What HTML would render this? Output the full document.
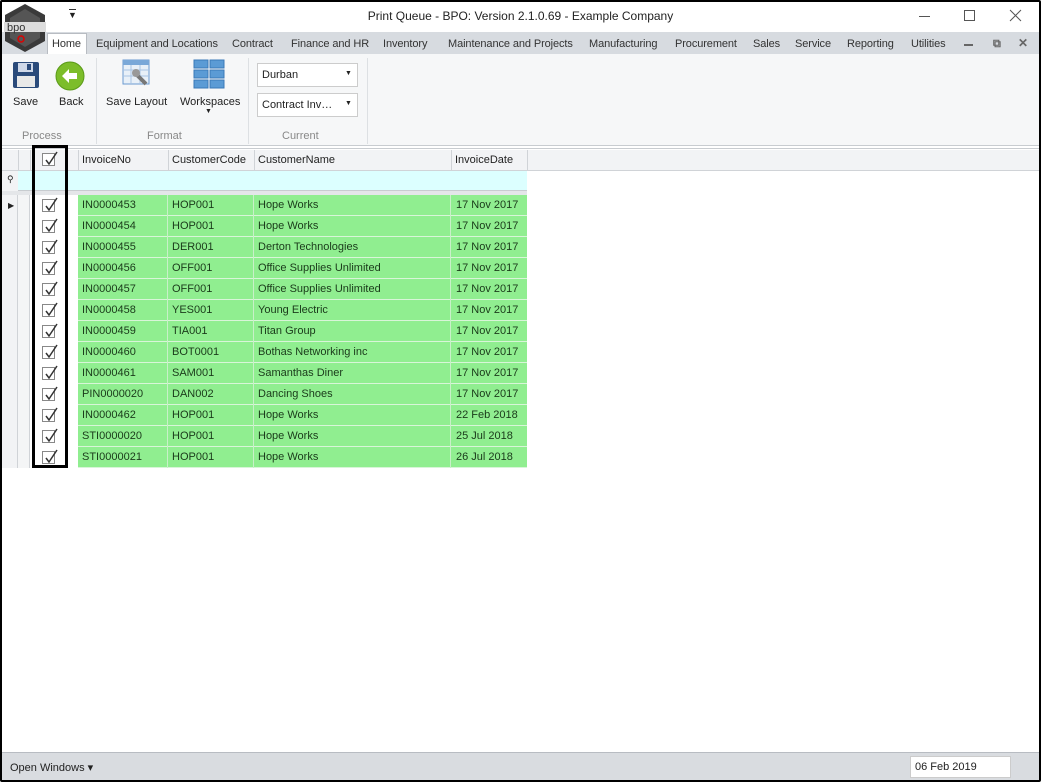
<!DOCTYPE html>
<html><head><style>
*{margin:0;padding:0;box-sizing:border-box}
body{width:1041px;height:782px;position:relative;overflow:hidden;background:#fff;font-family:"Liberation Sans",sans-serif;font-size:11px;color:#222}
.a{position:absolute}
.frame{left:0;top:0;width:1041px;height:782px;border:2px solid #000;border-radius:2px}
.tab{top:38px;font-size:11px;color:#333;letter-spacing:-0.1px}
.gl{top:130px;font-size:11px;color:#888}
.cb{position:absolute;width:13px;height:13px;border:1px solid #888;background:#fff}
.cb svg{position:absolute;left:0;top:-3px}
.row{position:absolute;left:78px;width:449px;height:21px;background:#90ee90;border-bottom:1px solid #d8f5d8}
.row span{position:absolute;top:4px;font-size:11px;color:#1a3a1a}
.hdr span{position:absolute;top:4px}
</style></head><body>
<!-- title bar -->
<div class="a" style="left:0;top:0;width:1041px;height:32px;background:#fff"></div>
<div class="a" style="left:68px;top:10px;font-size:9px">&#9660;</div>
<div class="a" style="left:69px;top:9px;width:7px;height:1px;background:#333"></div>
<div class="a" style="left:0;top:9px;width:1041px;text-align:center;font-size:12px;color:#222">Print Queue - BPO: Version 2.1.0.69 - Example Company</div>
<div class="a" style="left:919px;top:16px;width:11px;height:1px;background:#555"></div>
<div class="a" style="left:964px;top:10px;width:11px;height:11px;border:1px solid #555"></div>
<svg class="a" style="left:1009px;top:9px" width="13" height="13"><path d="M1 1L12 12M12 1L1 12" stroke="#555"/></svg>
<!-- tab strip -->
<div class="a" style="left:2px;top:32px;width:1037px;height:22px;background:#d7dbe0"></div>
<div class="a" style="left:47px;top:33px;width:40px;height:22px;background:#fff;border:1px solid #b8bcc2;border-bottom:none"></div>
<div class="a tab" style="left:52px">Home</div>
<div class="a tab" style="left:96px">Equipment and Locations</div>
<div class="a tab" style="left:232px">Contract</div>
<div class="a tab" style="left:291px">Finance and HR</div>
<div class="a tab" style="left:383px">Inventory</div>
<div class="a tab" style="left:448px">Maintenance and Projects</div>
<div class="a tab" style="left:589px">Manufacturing</div>
<div class="a tab" style="left:675px">Procurement</div>
<div class="a tab" style="left:753px">Sales</div>
<div class="a tab" style="left:795px">Service</div>
<div class="a tab" style="left:847px">Reporting</div>
<div class="a tab" style="left:911px">Utilities</div>
<div class="a" style="left:964px;top:44px;width:9px;height:2px;background:#666"></div>
<div class="a" style="left:993px;top:38px;font-size:11px;color:#666;font-weight:bold">&#10697;</div>
<div class="a" style="left:1018px;top:36px;font-size:12px;color:#666;font-weight:bold">&#10005;</div>
<svg class="a" style="left:3px;top:3px" width="44" height="50" viewBox="0 0 44 50"><polygon points="22,1 42,12 42,38 22,49 2,38 2,12" fill="#3a3a3a"/><polygon points="22,6 37,15 37,35 22,44 7,35 7,15" fill="#555"/><rect x="1" y="19" width="42" height="10" fill="#ddd"/><text x="4" y="28" font-size="11" fill="#333" font-family="Liberation Sans">bpo</text><circle cx="18" cy="36" r="3" fill="none" stroke="#d00" stroke-width="1.5"/></svg>
<!-- ribbon -->
<div class="a" style="left:2px;top:54px;width:1037px;height:92px;background:#f6f7f8;border-bottom:1px solid #c8ccd0"></div>
<div class="a" style="left:96px;top:58px;width:1px;height:86px;background:#dde0e3"></div>
<div class="a" style="left:248px;top:58px;width:1px;height:86px;background:#dde0e3"></div>
<div class="a" style="left:367px;top:58px;width:1px;height:86px;background:#dde0e3"></div>
<svg class="a" style="left:12px;top:61px" width="28" height="28"><rect x="1" y="1" width="26" height="26" rx="2" fill="#2a4a7a"/><rect x="6" y="2" width="15" height="9" fill="#cfd8e8"/><rect x="15" y="3" width="4" height="6" fill="#2a4a7a"/><rect x="5" y="15" width="18" height="11" fill="#e8e8e8"/></svg>
<svg class="a" style="left:55px;top:61px" width="30" height="30"><circle cx="15" cy="15" r="14" fill="#7cbd2a" stroke="#5a9a18"/><path d="M7 15l7-7v4h8v6h-8v4z" fill="#fff"/></svg>
<div class="a" style="left:13px;top:96px">Save</div>
<div class="a" style="left:59px;top:96px">Back</div>
<svg class="a" style="left:122px;top:58px" width="32" height="32"><rect x="1" y="2" width="26" height="24" fill="#e8f0f8" stroke="#6a9ad0"/><rect x="1" y="2" width="26" height="5" fill="#7aa8d8"/><path d="M1 12h26M1 18h26M9 7v19M18 7v19" stroke="#a8c4e4"/><path d="M14 16l10 10" stroke="#777" stroke-width="4"/><circle cx="14" cy="15" r="4" fill="#999"/></svg>
<svg class="a" style="left:193px;top:58px" width="32" height="32"><g fill="#5b9bd5" stroke="#3a78b8"><rect x="1" y="2" width="14" height="8"/><rect x="17" y="2" width="14" height="8"/><rect x="1" y="12" width="14" height="8"/><rect x="17" y="12" width="14" height="8"/><rect x="1" y="22" width="14" height="8"/><rect x="17" y="22" width="14" height="8"/></g></svg>
<div class="a" style="left:106px;top:96px">Save Layout</div>
<div class="a" style="left:180px;top:96px">Workspaces</div>
<div class="a" style="left:205px;top:108px;font-size:7px">&#9660;</div>
<div class="a" style="left:257px;top:63px;width:101px;height:24px;background:#fff;border:1px solid #ccc"></div>
<div class="a" style="left:262px;top:69px">Durban</div>
<div class="a" style="left:345px;top:70px;font-size:7px">&#9660;</div>
<div class="a" style="left:257px;top:93px;width:101px;height:24px;background:#fff;border:1px solid #ccc"></div>
<div class="a" style="left:262px;top:99px">Contract Inv…</div>
<div class="a" style="left:345px;top:100px;font-size:7px">&#9660;</div>
<div class="a gl" style="left:22px">Process</div>
<div class="a gl" style="left:147px">Format</div>
<div class="a gl" style="left:282px">Current</div>
<!-- grid header -->
<div class="a" style="left:2px;top:148px;width:1037px;height:1px;background:#c8ccd0"></div>
<div class="a hdr" style="left:2px;top:150px;width:1037px;height:21px;background:#f2f3f5;border-bottom:1px solid #d0d3d7">
<div class="a" style="left:16px;top:0;width:1px;height:21px;background:#d0d3d7"></div>
<div class="a" style="left:28px;top:0;width:1px;height:21px;background:#d0d3d7"></div>
<div class="a" style="left:76px;top:0;width:1px;height:21px;background:#d0d3d7"></div>
<div class="a" style="left:166px;top:0;width:1px;height:21px;background:#d0d3d7"></div>
<div class="a" style="left:252px;top:0;width:1px;height:21px;background:#d0d3d7"></div>
<div class="a" style="left:449px;top:0;width:1px;height:21px;background:#d0d3d7"></div>
<div class="a" style="left:525px;top:0;width:1px;height:21px;background:#d0d3d7"></div>
<span style="left:80px">InvoiceNo</span><span style="left:170px">CustomerCode</span><span style="left:256px">CustomerName</span><span style="left:453px">InvoiceDate</span>
</div>
<div class="a" style="left:2px;top:171px;width:16px;height:20px;background:#f2f3f5"></div>
<div class="a" style="left:7px;top:174px;font-size:9px">&#9906;</div>
<div class="a" style="left:18px;top:171px;width:509px;height:20px;background:#dcffff;border-bottom:1px solid #c8ccd0"></div>
<div class="a" style="left:2px;top:191px;width:525px;height:4px;background:#e4e6e9"></div>
<div class="a" style="left:2px;top:195px;width:16px;height:273px;background:#f2f3f5;border-right:1px solid #d0d3d7"></div>
<div class="a" style="left:18px;top:195px;width:12px;height:273px;background:#f4f5f6;border-right:1px solid #d0d3d7"></div>
<div class="a" style="left:8px;top:201px;font-size:8px">&#9654;</div>
<div id="rows"></div>
<div class="a" style="left:32px;top:145px;width:36px;height:323px;border:3px solid #000"></div>
<!-- status -->
<div class="a" style="left:2px;top:752px;width:1037px;height:28px;background:#d9dce0;border-top:1px solid #b8bcc2"></div>
<div class="a" style="left:10px;top:761px">Open Windows &#9662;</div>
<div class="a" style="left:910px;top:756px;width:101px;height:22px;background:#fff;border:1px solid #ccc"></div>
<div class="a" style="left:915px;top:761px">06 Feb 2019</div>
<div class="a frame"></div>
<script>
var d=[["IN0000453","HOP001","Hope Works","17 Nov 2017"],["IN0000454","HOP001","Hope Works","17 Nov 2017"],["IN0000455","DER001","Derton Technologies","17 Nov 2017"],["IN0000456","OFF001","Office Supplies Unlimited","17 Nov 2017"],["IN0000457","OFF001","Office Supplies Unlimited","17 Nov 2017"],["IN0000458","YES001","Young Electric","17 Nov 2017"],["IN0000459","TIA001","Titan Group","17 Nov 2017"],["IN0000460","BOT0001","Bothas Networking inc","17 Nov 2017"],["IN0000461","SAM001","Samanthas Diner","17 Nov 2017"],["PIN0000020","DAN002","Dancing Shoes","17 Nov 2017"],["IN0000462","HOP001","Hope Works","22 Feb 2018"],["STI0000020","HOP001","Hope Works","25 Jul 2018"],["STI0000021","HOP001","Hope Works","26 Jul 2018"]];
var h='',ck='<svg width="16" height="16"><path d="M3 9l3 4 8-12" stroke="#333" stroke-width="1.5" fill="none"/></svg>';
d.forEach(function(r,i){var t=195+i*21;
h+='<div class="row" style="top:'+t+'px"><span style="left:4px">'+r[0]+'</span><span style="left:94px">'+r[1]+'</span><span style="left:180px">'+r[2]+'</span><span style="left:378px">'+r[3]+'</span><div class="a" style="left:89px;top:0;width:1px;height:21px;background:#c8f0c8"></div><div class="a" style="left:175px;top:0;width:1px;height:21px;background:#c8f0c8"></div><div class="a" style="left:372px;top:0;width:1px;height:21px;background:#c8f0c8"></div></div>';
h+='<div class="cb" style="left:42px;top:'+(t+4)+'px">'+ck+'</div>';});
h+='<div class="cb" style="left:42px;top:153px">'+ck+'</div>';
document.getElementById('rows').innerHTML=h;
</script>
</body></html>
